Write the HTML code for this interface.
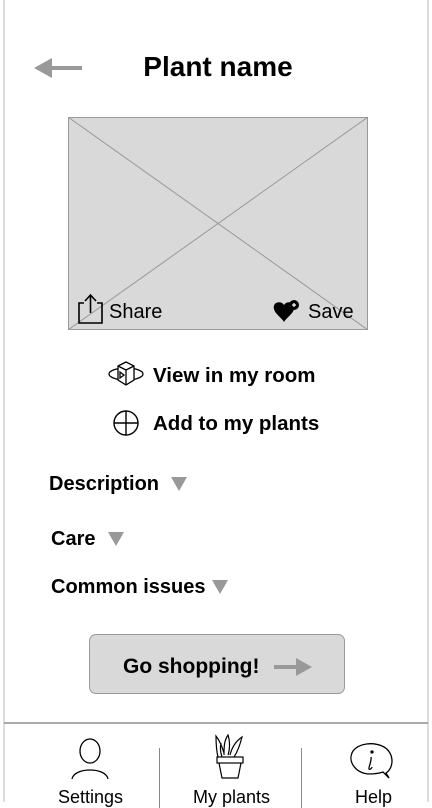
<!DOCTYPE html>
<html><head><style>
body{margin:0;width:432px;height:802px;overflow:hidden;background:#fff;font-family:"Liberation Sans",Arial,sans-serif;position:relative}
.a{position:absolute}
.b{font-weight:bold;color:#000}
</style></head><body>
<div class="a" style="left:3px;top:0;width:2px;height:802px;background:#ddd"></div>
<div class="a" style="left:427px;top:0;width:2px;height:802px;background:#ddd"></div>
<svg class="a" style="left:30px;top:55px" width="52" height="26"><polygon points="4,13 22,3 22,23" fill="#999"/><rect x="18" y="11" width="34" height="4" fill="#999"/></svg>
<div class="a b" style="left:0;width:436px;top:51px;text-align:center;font-size:28px">Plant name</div>
<svg class="a" style="left:68px;top:117px" width="300" height="213"><rect x="0.5" y="0.5" width="299" height="212" fill="#d9d9d9" stroke="#999"/><line x1="0" y1="0" x2="300" y2="213" stroke="#999"/><line x1="300" y1="0" x2="0" y2="213" stroke="#999"/>
<g fill="none" stroke="#000" stroke-width="1.6"><path d="M16 186 H11 V206 H34 V186 H29"/><path d="M22.5 196 V178 M17 184 L22.5 178 L28 184"/></g>
<path d="M216 188 c-3-5-12-3-10 4 c1 5 8 9 10 13 c2-4 9-8 10-13 c2-7-7-9-10-4z" fill="#000"/><circle cx="226" cy="188" r="5" fill="#000"/><path d="M224 188h4M226 186v4" stroke="#fff" stroke-width="1.2"/>
<text x="41" y="201" font-size="20" font-family="Liberation Sans">Share</text><text x="240" y="201" font-size="20" font-family="Liberation Sans">Save</text></svg>
<svg class="a" style="left:106px;top:360px" width="40" height="30" fill="none" stroke="#000" stroke-width="1.3"><ellipse cx="20" cy="14" rx="17" ry="6"/><path d="M12 6 L20 2 L28 6 V20 L20 25 L12 20Z" fill="#fff"/><path d="M12 6 L20 10 L28 6 M20 10 V25"/><path d="M14 12 v6 l4-3z"/></svg>
<div class="a b" style="left:153px;top:364px;font-size:20.5px">View in my room</div>
<svg class="a" style="left:112px;top:409px" width="30" height="30" fill="none" stroke="#000" stroke-width="1.4"><circle cx="14" cy="14" r="12"/><path d="M2 14h24M14 2v24"/></svg>
<div class="a b" style="left:153px;top:412px;font-size:20.5px">Add to my plants</div>
<div class="a b" style="left:49px;top:473px;font-size:20px">Description</div>
<svg class="a" style="left:170px;top:476px" width="18" height="16"><polygon points="1,1 17,1 9,15" fill="#999"/></svg>
<div class="a b" style="left:51px;top:528px;font-size:20px">Care</div>
<svg class="a" style="left:107px;top:531px" width="18" height="16"><polygon points="1,1 17,1 9,15" fill="#999"/></svg>
<div class="a b" style="left:51px;top:576px;font-size:20px">Common issues</div>
<svg class="a" style="left:211px;top:579px" width="18" height="16"><polygon points="1,1 17,1 9,15" fill="#999"/></svg>
<div class="a" style="left:89px;top:634px;width:254px;height:58px;background:#d9d9d9;border:1px solid #999;border-radius:7px"></div>
<div class="a b" style="left:123px;top:655px;font-size:21px">Go shopping!</div>
<svg class="a" style="left:272px;top:655px" width="42" height="24"><rect x="2" y="10" width="28" height="4" fill="#999"/><polygon points="40,12 24,3 24,21" fill="#999"/></svg>
<div class="a" style="left:4px;top:722px;width:424px;height:2px;background:#aaa"></div>
<div class="a" style="left:159px;top:748px;width:1px;height:60px;background:#888"></div>
<div class="a" style="left:301px;top:748px;width:1px;height:60px;background:#888"></div>
<svg class="a" style="left:68px;top:736px" width="44" height="44" fill="none" stroke="#000" stroke-width="1.3"><ellipse cx="22" cy="15" rx="10" ry="12"/><path d="M4 43 c2-12 34-12 36 0"/></svg>
<svg class="a" style="left:212px;top:733px" width="36" height="48" fill="none" stroke="#000" stroke-width="1.2"><path d="M6 24 C4 16 4 8 4 3 C8 8 10 14 12 20 M12 22 C12 14 12 8 16 2 C18 8 18 16 16 22 M18 22 C20 14 24 8 30 4 C28 12 26 18 22 24 M10 24 C8 18 8 14 9 10"/><rect x="5" y="24" width="26" height="6" fill="#fff"/><path d="M7 30 L10 45 H26 L29 30"/></svg>
<svg class="a" style="left:349px;top:741px" width="46" height="40" fill="none" stroke="#000" stroke-width="1.3"><path d="M37 32 C46 26 45 10 33 5 C24 1 10 2 4 10 C-2 20 6 32 20 33 C26 33 31 32 34 31 L40 37 Z"/><path d="M22 16 c1 4-3 11-2 12 c1 1 3-1 3-2"/><circle cx="23" cy="11" r="1" fill="#000"/></svg>
<div class="a" style="left:58px;top:787px;font-size:18px">Settings</div>
<div class="a" style="left:193px;top:787px;font-size:18px">My plants</div>
<div class="a" style="left:355px;top:787px;font-size:18px">Help</div>
</body></html>
